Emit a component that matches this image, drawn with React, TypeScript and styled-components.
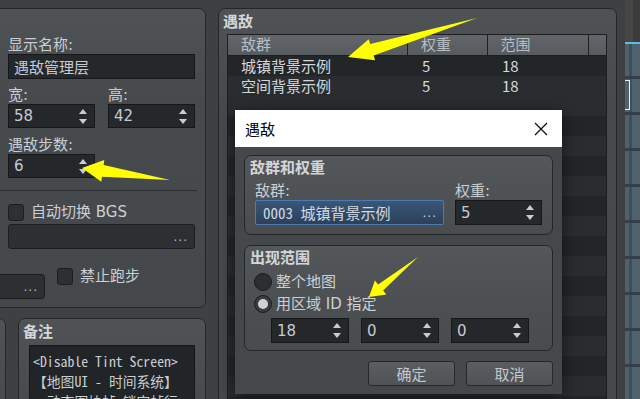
import React from "react";
import styled, { createGlobalStyle } from "styled-components";

const UI = `"DejaVu Sans", "Noto Sans CJK SC", sans-serif`;
const MONO = `"Noto Sans Mono CJK SC", "DejaVu Sans Mono", "Noto Sans CJK SC", monospace`;

const Global = createGlobalStyle`
  html, body { margin: 0; padding: 0; }
  body {
    width: 640px;
    height: 399px;
    overflow: hidden;
    background: #3e4042;
    font-family: ${UI};
    color: #cbd0d5;
  }
`;

const Screen = styled.div`
  position: relative;
  display: flex;
  width: 640px;
  height: 399px;
  overflow: hidden;
`;

const LeftCol = styled.div`
  display: flex;
  flex-direction: column;
  gap: 10px;
  width: 206px;
  flex: none;
  margin-top: 8px;
`;

const Group = styled.div`
  box-sizing: border-box;
  border: 1px solid #242628;
  border-radius: 7px;
  background: linear-gradient(180deg, #505356 0px, #474a4d 90px, #45484b 100%);
`;

const SettingsPanel = styled(Group)`
  margin-left: -12px;
  width: 218px;
  height: 300px;
  flex: none;
  padding: 28px 10px 0 19px;
  display: flex;
  flex-direction: column;
`;

const Label = styled.div<{ $top?: number }>`
  font-size: 15px;
  line-height: 16px;
  height: 16px;
  white-space: nowrap;
  color: #c9ced3;
  margin-top: ${(p) => p.$top ?? 0}px;
  margin-bottom: 1px;
`;

const Field = styled.div<{ $w?: number; $h?: number }>`
  box-sizing: border-box;
  display: flex;
  align-items: center;
  width: ${(p) => (p.$w ? `${p.$w}px` : "100%")};
  height: ${(p) => p.$h ?? 25}px;
  padding: 0 7px 0 5px;
  background: #25282b;
  border: 1px solid #15171a;
  font-size: 15px;
  color: #c5cbd1;
  white-space: nowrap;
`;

const Value = styled.span`
  flex: 1;
  overflow: hidden;
`;

const PairRow = styled.div`
  display: flex;
  gap: 13px;
`;

const Col = styled.div<{ $w: number }>`
  display: flex;
  flex-direction: column;
  width: ${(p) => p.$w}px;
`;

const Divider = styled.div`
  height: 1px;
  background: #2b2d30;
  margin: 12px -2px 0 -20px;
`;

const CheckRow = styled.div<{ $top?: number }>`
  display: flex;
  align-items: center;
  gap: 7px;
  margin-top: ${(p) => p.$top ?? 0}px;
  font-size: 15px;
  line-height: 17px;
  white-space: nowrap;
`;

const CheckBox = styled.div`
  box-sizing: border-box;
  width: 16px;
  height: 17px;
  border-radius: 3px;
  background: #2d3033;
  border: 1px solid #1b1d1f;
  flex: none;
`;

const PickBox = styled.div<{ $w?: number; $top?: number; $left?: number }>`
  box-sizing: border-box;
  display: flex;
  align-items: center;
  justify-content: flex-end;
  width: ${(p) => (p.$w ? `${p.$w}px` : "100%")};
  height: 25px;
  margin-top: ${(p) => p.$top ?? 0}px;
  margin-left: ${(p) => p.$left ?? 0}px;
  padding-right: 6px;
  background: #2d3033;
  border: 1px solid #1b1d1f;
  border-radius: 3px;
  color: #b9bec3;
  font-size: 12px;
  letter-spacing: 1px;
  flex: none;
`;

const BottomRow = styled.div`
  display: flex;
  align-items: flex-start;
  gap: 12px;
  margin-top: 19px;
`;

const NotesRow = styled.div`
  display: flex;
  gap: 12px;
`;

const StubPanel = styled(Group)`
  width: 26px;
  height: 100px;
  margin-left: -20px;
  flex: none;
`;

const NotesPanel = styled(Group)`
  width: 188px;
  height: 100px;
  flex: none;
  padding: 5px 0 0 4px;
`;

const GroupTitle = styled.div`
  font-size: 15px;
  line-height: 16px;
  font-weight: bold;
  color: #d2d6da;
  white-space: nowrap;
`;

const NotesText = styled.div`
  box-sizing: border-box;
  width: 166px;
  height: 70px;
  margin: 5px 0 0 6px;
  padding: 5px 3px;
  background: #222528;
  border: 1px solid #141618;
  font-family: ${MONO};
  font-size: 13.8px;
  line-height: 20px;
  color: #c9ced3;
  white-space: nowrap;
  overflow: hidden;
`;

const RightPanel = styled(Group)`
  width: 399px;
  height: 400px;
  flex: none;
  margin: 8px 0 0 12px;
  padding: 5px 9px 0 8px;
  display: flex;
  flex-direction: column;
`;

const PanelTitle = styled(GroupTitle)`
  margin-left: -4px;
`;

const Table = styled.div`
  width: 380px;
  flex: 1;
  margin-top: 4px;
  border: 1px solid #1c1e20;
  border-bottom: none;
  box-sizing: border-box;
  background: #25282a;
  overflow: hidden;
`;

const HeadRow = styled.div`
  display: flex;
  height: 20px;
  border-bottom: 1px solid #1c1e20;
  background: linear-gradient(180deg, #62666a, #575b5e);
`;

const HeadCell = styled.div<{ $w: number; $last?: boolean }>`
  box-sizing: border-box;
  width: ${(p) => p.$w}px;
  padding-left: 13px;
  border-right: ${(p) => (p.$last ? "none" : "1px solid #1e2022")};
  font-size: 15px;
  line-height: 20px;
  color: #b8bec4;
  white-space: nowrap;
`;

const BodyRow = styled.div<{ $alt: boolean }>`
  display: flex;
  height: 20px;
  background: ${(p) => (p.$alt ? "#2a2d2f" : "#232628")};
`;

const Cell = styled.div<{ $w: number }>`
  box-sizing: border-box;
  width: ${(p) => p.$w}px;
  padding-left: 13px;
  font-family: "Noto Sans CJK SC", sans-serif;
  font-size: 15px;
  line-height: 20px;
  color: #d3d8dc;
  white-space: nowrap;
`;

const MapView = styled.div`
  position: relative;
  flex: 1;
  margin-left: 8px;
  display: flex;
  flex-direction: column;
`;

const MapTop = styled.div`
  height: 42px;
  background-color: #3b3b3c;
  background-image: linear-gradient(90deg, #464647 50%, transparent 50%),
    linear-gradient(#3b3b3c 50%, transparent 50%);
  background-size: 16px 16px, 16px 16px;
`;

const MapLine = styled.div`
  height: 2px;
  background: #63b9e6;
`;

const MapTiles = styled.div`
  flex: 1;
  background-color: #4f626d;
  background-image: linear-gradient(#33404a 3px, transparent 3px),
    linear-gradient(90deg, transparent 4px, #3f4f59 4px, #3f4f59 7px, transparent 7px);
  background-size: 100% 36px, 100% 100%;
  background-position: 0 32px, 0 0;
`;

const Bracket = styled.div`
  position: absolute;
  left: 0;
  top: 80px;
  width: 4px;
  height: 28px;
  border: 1px solid #e8eef2;
  border-left: none;
`;

const Dialog = styled.div`
  position: absolute;
  left: 235px;
  top: 110px;
  width: 327px;
  height: 284px;
  display: flex;
  flex-direction: column;
  background: #45484b;
  box-shadow: 0 3px 14px rgba(0, 0, 0, 0.55);
`;

const TitleBar = styled.div`
  height: 37px;
  flex: none;
  display: flex;
  align-items: center;
  justify-content: space-between;
  padding: 0 14px 0 10px;
  background: #ffffff;
  color: #000000;
  font-size: 15px;
  font-family: "Noto Sans CJK SC", sans-serif;
`;

const DialogBody = styled.div`
  display: flex;
  flex-direction: column;
  padding: 8px 9px 0 9px;
`;

const DialogGroup = styled(Group)<{ $h: number; $top?: number }>`
  height: ${(p) => p.$h}px;
  margin-top: ${(p) => p.$top ?? 0}px;
  padding: 4px 10px 0 5px;
  display: flex;
  flex-direction: column;
  background: linear-gradient(180deg, #54575a 0px, #4b4e51 70px, #494c4f 100%);
`;

const FieldRow = styled.div`
  display: flex;
  gap: 11px;
  margin: 7px 0 0 5px;
`;

const Combo = styled.div`
  box-sizing: border-box;
  display: flex;
  align-items: center;
  width: 189px;
  height: 25px;
  padding: 0 6px 0 7px;
  border: 1px solid #4b7bb0;
  border-radius: 2px;
  background: linear-gradient(180deg, #3b5677, #2c4059);
  font-family: ${MONO};
  font-size: 15px;
  color: #d2d9e0;
  white-space: nowrap;
`;

const Dots = styled.span`
  font-family: ${UI};
  font-size: 12px;
  letter-spacing: 1px;
  color: #c8d0d8;
`;

const RadioRow = styled.label<{ $top: number }>`
  display: flex;
  align-items: center;
  gap: 4px;
  margin: ${(p) => p.$top}px 0 0 4px;
  font-size: 15px;
  line-height: 18px;
  white-space: nowrap;
`;

const Radio = styled.span<{ $on?: boolean }>`
  box-sizing: border-box;
  display: flex;
  align-items: center;
  justify-content: center;
  width: 18px;
  height: 18px;
  border-radius: 50%;
  background: ${(p) => (p.$on ? "#3a3d40" : "#2c2f32")};
  border: 1px solid #1b1d1f;
  &::after {
    content: "";
    display: ${(p) => (p.$on ? "block" : "none")};
    width: 10px;
    height: 10px;
    border-radius: 50%;
    background: #cfd1d3;
  }
`;

const SpinRow = styled.div`
  display: flex;
  gap: 12px;
  margin: 5px 0 0 21px;
`;

const ButtonRow = styled.div`
  display: flex;
  justify-content: flex-end;
  gap: 11px;
  margin-top: 10px;
`;

const Button = styled.button`
  box-sizing: border-box;
  width: 87px;
  height: 25px;
  border: 1px solid #26282a;
  border-radius: 3px;
  background: linear-gradient(180deg, #5b5e61, #505356);
  color: #c3c8cd;
  font-family: ${UI};
  font-size: 15px;
  padding: 0;
`;

const Overlay = styled.svg`
  position: absolute;
  left: 0;
  top: 0;
  pointer-events: none;
`;

function SpinArrows() {
  return (
    <svg width="8" height="15" viewBox="0 0 8 15">
      <polygon points="4,0 8,5 0,5" fill="#c9cdd1" />
      <polygon points="0,10 8,10 4,15" fill="#c9cdd1" />
    </svg>
  );
}

function Spin({ value, w, h }: { value: string; w?: number; h?: number }) {
  return (
    <Field $w={w} $h={h}>
      <Value>{value}</Value>
      <SpinArrows />
    </Field>
  );
}

function arrowPoints(
  tx: number,
  ty: number,
  px: number,
  py: number,
  headLen: number,
  headHalf: number,
  shaftHalf: number
) {
  const len = Math.hypot(px - tx, py - ty);
  const ux = (px - tx) / len;
  const uy = (py - ty) / len;
  const nx = -uy;
  const ny = ux;
  const bx = px - ux * headLen;
  const by = py - uy * headLen;
  return [
    [px, py],
    [bx + nx * headHalf, by + ny * headHalf],
    [bx + nx * shaftHalf, by + ny * shaftHalf],
    [tx, ty],
    [bx - nx * shaftHalf, by - ny * shaftHalf],
    [bx - nx * headHalf, by - ny * headHalf],
  ]
    .map((p) => p.map((n) => n.toFixed(1)).join(","))
    .join(" ");
}

const columns = [181, 80, 102, 17];
const troops = [
  ["城镇背景示例", "5", "18"],
  ["空间背景示例", "5", "18"],
];

export default function App() {
  const blank = Array.from({ length: 16 }, (_, i) => i);
  return (
    <Screen>
      <Global />
      <LeftCol>
        <SettingsPanel>
          <Label>显示名称:</Label>
          <Field>遇敌管理层</Field>
          <PairRow>
            <Col $w={87}>
              <Label $top={8}>宽:</Label>
              <Spin value="58" h={24} />
            </Col>
            <Col $w={87}>
              <Label $top={8}>高:</Label>
              <Spin value="42" h={24} />
            </Col>
          </PairRow>
          <Label $top={9}>遇敌步数:</Label>
          <Spin value="6" w={87} h={24} />
          <Divider />
          <CheckRow $top={13}>
            <CheckBox />
            自动切换 BGS
          </CheckRow>
          <PickBox $top={3}>...</PickBox>
          <BottomRow>
            <PickBox $w={65} $left={-28} $top={6}>
              ...
            </PickBox>
            <CheckRow>
              <CheckBox />
              禁止跑步
            </CheckRow>
          </BottomRow>
        </SettingsPanel>
        <NotesRow>
          <StubPanel />
          <NotesPanel>
            <GroupTitle>备注</GroupTitle>
            <NotesText>
              {"<Disable Tint Screen>"}
              <br />
              {"【地图UI - 时间系统】"}
              <br />
              {"·动态图块帧:锁定帧行"}
            </NotesText>
          </NotesPanel>
        </NotesRow>
      </LeftCol>

      <RightPanel>
        <PanelTitle>遇敌</PanelTitle>
        <Table>
          <HeadRow>
            <HeadCell $w={columns[0]}>敌群</HeadCell>
            <HeadCell $w={columns[1]}>权重</HeadCell>
            <HeadCell $w={columns[2]}>范围</HeadCell>
            <HeadCell $w={columns[3]} $last />
          </HeadRow>
          {troops.map((t, i) => (
            <BodyRow key={t[0]} $alt={i % 2 === 1}>
              <Cell $w={columns[0]}>{t[0]}</Cell>
              <Cell $w={columns[1]}>{t[1]}</Cell>
              <Cell $w={columns[2]}>{t[2]}</Cell>
            </BodyRow>
          ))}
          {blank.map((i) => (
            <BodyRow key={i} $alt={i % 2 === 0} />
          ))}
        </Table>
      </RightPanel>

      <MapView>
        <MapTop />
        <MapLine />
        <MapTiles />
        <Bracket />
      </MapView>

      <Dialog>
        <TitleBar>
          遇敌
          <svg width="14" height="14" viewBox="0 0 14 14">
            <path d="M1 1 L13 13 M13 1 L1 13" stroke="#111" strokeWidth="1.3" />
          </svg>
        </TitleBar>
        <DialogBody>
          <DialogGroup $h={80}>
            <GroupTitle>敌群和权重</GroupTitle>
            <FieldRow>
              <Col $w={189}>
                <Label>敌群:</Label>
                <Combo>
                  <Value>0003 城镇背景示例</Value>
                  <Dots>...</Dots>
                </Combo>
              </Col>
              <Col $w={87}>
                <Label>权重:</Label>
                <Spin value="5" />
              </Col>
            </FieldRow>
          </DialogGroup>
          <DialogGroup $h={106} $top={10}>
            <GroupTitle>出现范围</GroupTitle>
            <RadioRow $top={7}>
              <Radio />
              整个地图
            </RadioRow>
            <RadioRow $top={4}>
              <Radio $on />
              用区域 ID 指定
            </RadioRow>
            <SpinRow>
              <Spin value="18" w={78} />
              <Spin value="0" w={78} />
              <Spin value="0" w={78} />
            </SpinRow>
          </DialogGroup>
          <ButtonRow>
            <Button>确定</Button>
            <Button>取消</Button>
          </ButtonRow>
        </DialogBody>
      </Dialog>

      <Overlay width="640" height="399" viewBox="0 0 640 399">
        <polygon points={arrowPoints(477, 18, 348, 57, 25, 11, 6)} fill="#ffff00" />
        <polygon points={arrowPoints(170, 180, 82, 168, 21, 11, 6)} fill="#ffff00" />
        <polygon points={arrowPoints(418, 257, 369, 297, 15, 9, 4)} fill="#ffff00" />
      </Overlay>
    </Screen>
  );
}
